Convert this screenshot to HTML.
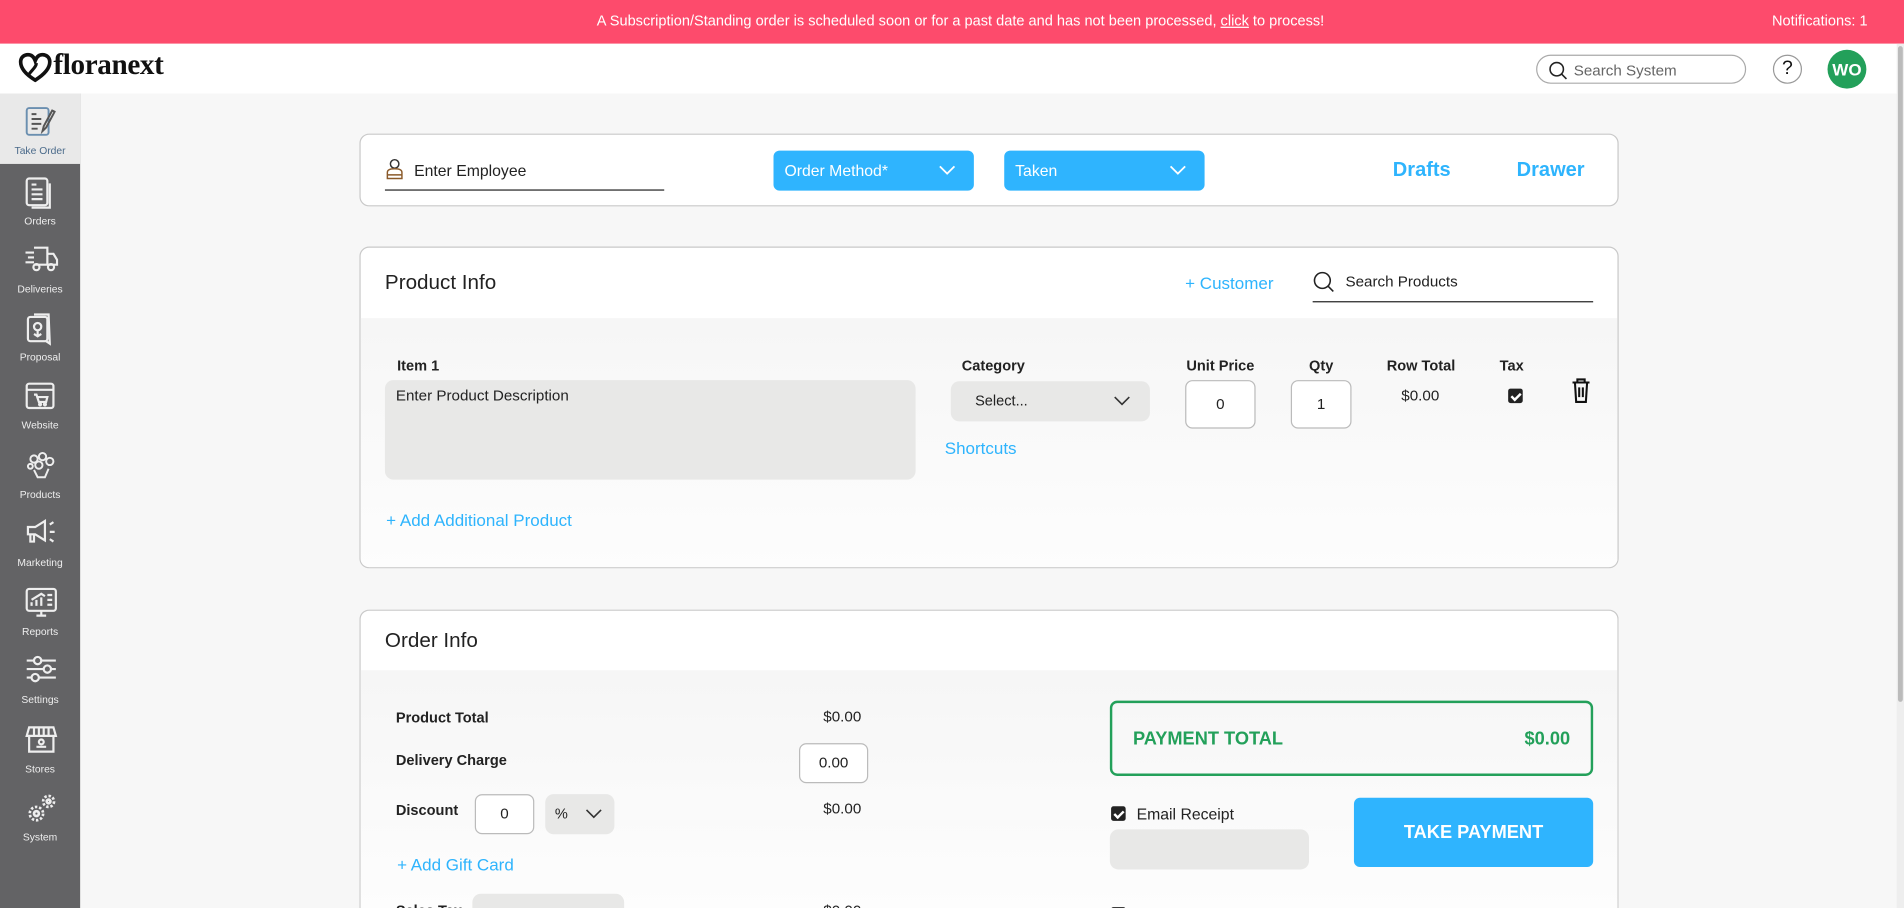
<!DOCTYPE html>
<html><head><meta charset="utf-8"><style>
*{box-sizing:border-box;margin:0;padding:0}
html,body{width:1904px;height:908px;overflow:hidden;background:#f7f7f7;font-family:"Liberation Sans",sans-serif;color:#222}
#o{position:relative;width:1904px;height:908px;overflow:hidden}
#w{position:absolute;left:0;top:0;width:1568px;height:748px;transform:scale(1.2143);transform-origin:0 0;background:#f7f7f7;overflow:hidden}
.a{position:absolute}
.bar{left:0;top:0;width:1568px;height:36px;background:#fd4b6c;color:#fff;font-size:12px}
.hdr{left:0;top:36px;width:1568px;height:41px;background:#fff}
.side{left:0;top:77px;width:66px;height:671px;background:#636365}
.si{position:absolute;left:0;width:66px;height:56px;text-align:center;color:#eee;font-size:8.5px}
.si svg{position:absolute;left:20px;top:10px}
.si span{position:absolute;left:0;right:0;top:42px}
.card{background:#fff;border:1px solid #c9c9c9;border-radius:8px}
.blue{color:#2eb4fd}
.btn{background:#2fb4fe;border-radius:5px;color:#fff;font-size:13px}
.lbl{font-size:12px;font-weight:bold;color:#222}
.inp{background:#fff;border:1px solid #bbb;border-radius:6px;font-size:12.5px;text-align:center}
.gray{background:#e8e8e7;border-radius:7px}
.chk{width:12px;height:12px;background:#222;border-radius:2px}
.chk:after{content:"";position:absolute;left:4px;top:1.5px;width:3px;height:6px;border:solid #fff;border-width:0 2px 2px 0;transform:rotate(45deg)}
</style></head><body><div id="o"><div id="w">
<div class="a bar"><div class="a" style="left:0;width:1582px;top:10px;text-align:center">A Subscription/Standing order is scheduled soon or for a past date and has not been processed, <u>click</u> to process!</div><div class="a" style="right:30px;top:10px">Notifications: 1</div></div>
<div class="a hdr">
<svg class="a" style="left:15px;top:7px" width="28" height="25" viewBox="0 0 28 25"><path d="M14 23C4 17 2 12 2 8 2 4 5 2 8 2c3 0 5 2 6 5 1-3 3-5 6-5 3 0 6 2 6 6 0 5-4 10-12 15z" fill="none" stroke="#111" stroke-width="3"/><path d="M9 18c2-3 6-6 6-9" fill="none" stroke="#111" stroke-width="2.5"/></svg>
<div class="a" style="left:44px;top:5px;font-family:'Liberation Serif',serif;font-weight:bold;font-size:24px;color:#111;letter-spacing:-0.3px">floranext</div>
<div class="a" style="left:1265px;top:9px;width:173px;height:24px;border:1px solid #aaa;border-radius:12px"><svg class="a" style="left:9px;top:4px" width="16" height="16" viewBox="0 0 16 16"><circle cx="7" cy="7" r="5.5" fill="none" stroke="#222" stroke-width="1.3"/><path d="M11 11l4 4" stroke="#222" stroke-width="1.3"/></svg><span class="a" style="left:30px;top:5px;font-size:12.5px;color:#666">Search System</span></div>
<div class="a" style="left:1460px;top:9px;width:24px;height:24px;border:1px solid #999;border-radius:50%;text-align:center;font-size:16px;line-height:22px;color:#111">?</div>
<div class="a" style="left:1505px;top:5px;width:32px;height:32px;background:#23a05a;border-radius:50%;color:#fff;font-weight:bold;font-size:14px;text-align:center;line-height:32px">WO</div>
</div>
<div class="a" style="left:1562px;top:36px;width:6px;height:712px;background:#eee"><div style="margin:2px 1px;height:540px;background:#bbb;border-radius:3px"></div></div>
<div class="a side">
<div class="si" style="top:0;background:#e9e9e9;height:58px;color:#4a6a8a"><svg width="26" height="26" viewBox="0 0 26 26" fill="none" stroke="#555" stroke-width="1.6"><rect x="2" y="2" width="18" height="22" rx="2" stroke="#6b8fb0"/><path d="M6 7h4M6 11h8M6 15h8M6 19h5"/><path d="M23 4l-7 13-1 4 3-3 7-13z"/></svg><span>Take Order</span></div>
<div class="si" style="top:58px"><svg width="26" height="28" viewBox="0 0 26 28" fill="none" stroke="#eee" stroke-width="1.8"><rect x="2" y="2" width="17" height="22" rx="2"/><path d="M21 6v20H6"/><path d="M6 7h4M6 11h9M6 15h9M6 19h9"/></svg><span>Orders</span></div>
<div class="si" style="top:114px"><svg width="28" height="24" viewBox="0 0 28 24" fill="none" stroke="#eee" stroke-width="1.8"><path d="M8 3h11v14H8M19 8h5l3 5v4h-8"/><circle cx="10" cy="19" r="2.5"/><circle cx="22" cy="19" r="2.5"/><path d="M1 7h7M3 11h5M1 15h7"/></svg><span>Deliveries</span></div>
<div class="si" style="top:170px"><svg width="26" height="28" viewBox="0 0 26 28" fill="none" stroke="#eee" stroke-width="1.8"><rect x="3" y="4" width="16" height="20" rx="2"/><path d="M8 2h12l1 24-3-2"/><circle cx="11" cy="12" r="3"/><path d="M11 15v5M8 18l3 2 3-2"/></svg><span>Proposal</span></div>
<div class="si" style="top:226px"><svg width="26" height="26" viewBox="0 0 26 26" fill="none" stroke="#eee" stroke-width="1.8"><rect x="2" y="3" width="22" height="20" rx="2"/><path d="M2 8h22M8 12h2l2 6h6l1-4h-9"/><circle cx="13" cy="20" r=".8"/><circle cx="17" cy="20" r=".8"/></svg><span>Website</span></div>
<div class="si" style="top:283px"><svg width="28" height="28" viewBox="0 0 28 28" fill="none" stroke="#eee" stroke-width="1.6"><circle cx="8" cy="8" r="3"/><circle cx="15" cy="6" r="3"/><circle cx="21" cy="10" r="3"/><circle cx="12" cy="13" r="3"/><circle cx="5" cy="14" r="2"/><path d="M8 17l3 6h6l3-7"/></svg><span>Products</span></div>
<div class="si" style="top:339px"><svg width="28" height="24" viewBox="0 0 28 24" fill="none" stroke="#eee" stroke-width="1.8"><path d="M3 8h6l8-5v16l-8-5H3zM5 14v6h3v-6"/><path d="M21 6l3-2M21 12h4M21 18l3 2"/></svg><span>Marketing</span></div>
<div class="si" style="top:396px"><svg width="28" height="28" viewBox="0 0 28 28" fill="none" stroke="#eee" stroke-width="1.8"><rect x="2" y="2" width="24" height="18" rx="2"/><path d="M6 16v-3M10 16v-5M14 16v-7M6 11l8-5 3 2M19 7h4M19 11h4M19 15h4M10 24h8M14 20v4"/></svg><span>Reports</span></div>
<div class="si" style="top:452px"><svg width="28" height="24" viewBox="0 0 28 24" fill="none" stroke="#eee" stroke-width="1.8"><path d="M2 5h6M14 5h12M2 12h14M22 12h4M2 19h4M12 19h14"/><circle cx="11" cy="5" r="3"/><circle cx="19" cy="12" r="3"/><circle cx="9" cy="19" r="3"/></svg><span>Settings</span></div>
<div class="si" style="top:509px"><svg width="28" height="26" viewBox="0 0 28 26" fill="none" stroke="#eee" stroke-width="1.8"><path d="M4 3h20l2 7H2zM4 10v13h20V10"/><path d="M8 3v7M12 3v7M16 3v7M20 3v7"/><circle cx="14" cy="15" r="2"/><path d="M10 19h8"/></svg><span>Stores</span></div>
<div class="si" style="top:565px"><svg width="28" height="28" viewBox="0 0 28 28" fill="none" stroke="#eee" stroke-width="2.2"><circle cx="10" cy="18" r="5.5" stroke-dasharray="2 1.5"/><circle cx="10" cy="18" r="2"/><circle cx="20" cy="8" r="4.5" stroke-dasharray="2 1.5"/><circle cx="20" cy="8" r="1.5"/></svg><span>System</span></div>
</div>

<div class="a card" style="left:296px;top:110px;width:1037px;height:60px">
<svg class="a" style="left:20px;top:19px" width="16" height="18" viewBox="0 0 16 18" fill="none" stroke="#333" stroke-width="1.2"><circle cx="8" cy="5" r="3.5"/><path d="M2 17v-5c0-2 2-3 6-3s6 1 6 3v5zM2 14h12" stroke="#8a5a2a"/></svg>
<div class="a" style="left:44px;top:22px;font-size:13px">Enter Employee</div>
<div class="a" style="left:20px;top:45px;width:230px;height:1px;background:#222"></div>
<div class="a btn" style="left:340px;top:13px;width:165px;height:33px"><span class="a" style="left:9px;top:9px">Order Method*</span><svg class="a" style="left:136px;top:12px" width="14" height="9" viewBox="0 0 14 9"><path d="M1 1l6 6 6-6" fill="none" stroke="#fff" stroke-width="1.5"/></svg></div>
<div class="a btn" style="left:530px;top:13px;width:165px;height:33px"><span class="a" style="left:9px;top:9px">Taken</span><svg class="a" style="left:136px;top:12px" width="14" height="9" viewBox="0 0 14 9"><path d="M1 1l6 6 6-6" fill="none" stroke="#fff" stroke-width="1.5"/></svg></div>
<div class="a blue" style="left:850px;top:20px;font-size:16.5px;font-weight:bold">Drafts</div>
<div class="a blue" style="left:952px;top:20px;font-size:16.5px;font-weight:bold">Drawer</div>
</div>

<div class="a card" style="left:296px;top:203px;width:1037px;height:265px;overflow:hidden">
<div class="a" style="left:0;top:58px;width:1037px;height:207px;background:linear-gradient(#f6f6f6,#fdfdfd)"></div>
<div class="a" style="left:20px;top:19px;font-size:17px">Product Info</div>
<div class="a blue" style="left:679px;top:21px;font-size:14px">+ Customer</div>
<svg class="a" style="left:784px;top:19px" width="18" height="18" viewBox="0 0 18 18"><circle cx="8" cy="8" r="6.5" fill="none" stroke="#222" stroke-width="1.3"/><path d="M12.5 12.5l4.5 4.5" stroke="#222" stroke-width="1.3"/></svg>
<div class="a" style="left:811px;top:21px;font-size:12.5px">Search Products</div>
<div class="a" style="left:784px;top:44px;width:231px;height:1px;background:#222"></div>
<div class="a lbl" style="left:30px;top:90px">Item 1</div>
<div class="a lbl" style="left:495px;top:90px">Category</div>
<div class="a lbl" style="left:680px;top:90px">Unit Price</div>
<div class="a lbl" style="left:781px;top:90px">Qty</div>
<div class="a lbl" style="left:845px;top:90px">Row Total</div>
<div class="a lbl" style="left:938px;top:90px">Tax</div>
<div class="a gray" style="left:20px;top:109px;width:437px;height:82px"><span class="a" style="left:9px;top:6px;font-size:12.5px">Enter Product Description</span></div>
<div class="a gray" style="left:486px;top:110px;width:164px;height:33px"><span class="a" style="left:20px;top:9px;font-size:12px">Select...</span><svg class="a" style="left:134px;top:12px" width="14" height="9" viewBox="0 0 14 9"><path d="M1 1l6 6 6-6" fill="none" stroke="#333" stroke-width="1.3"/></svg></div>
<div class="a blue" style="left:481px;top:157px;font-size:14px">Shortcuts</div>
<div class="a inp" style="left:679px;top:109px;width:58px;height:40px;line-height:38px">0</div>
<div class="a inp" style="left:766px;top:109px;width:50px;height:40px;line-height:38px">1</div>
<div class="a" style="left:857px;top:115px;font-size:12.5px">$0.00</div>
<div class="a chk" style="left:945px;top:116px"></div>
<svg class="a" style="left:997px;top:107px" width="16" height="21" viewBox="0 0 16 21" fill="none" stroke="#111" stroke-width="1.7"><path d="M1 4h14M5 4V1.5h6V4M3 4l1 16h8l1-16M6.5 8v8M9.5 8v8"/></svg>
<div class="a blue" style="left:21px;top:216px;font-size:14px">+ Add Additional Product</div>
</div>

<div class="a card" style="left:296px;top:502px;width:1037px;height:246px;overflow:hidden;border-bottom:none;border-radius:8px 8px 0 0">
<div class="a" style="left:0;top:49px;width:1037px;height:197px;background:linear-gradient(#f6f6f6,#fdfdfd)"></div>
<div class="a" style="left:20px;top:15px;font-size:17px">Order Info</div>
<div class="a lbl" style="left:29px;top:81px">Product Total</div>
<div class="a" style="left:381px;top:80px;font-size:12.5px">$0.00</div>
<div class="a lbl" style="left:29px;top:116px">Delivery Charge</div>
<div class="a inp" style="left:361px;top:109px;width:57px;height:33px;line-height:31px">0.00</div>
<div class="a lbl" style="left:29px;top:157px">Discount</div>
<div class="a inp" style="left:94px;top:151px;width:49px;height:33px;line-height:31px">0</div>
<div class="a gray" style="left:152px;top:151px;width:57px;height:33px"><span class="a" style="left:8px;top:9px;font-size:12px">%</span><svg class="a" style="left:33px;top:12px" width="14" height="9" viewBox="0 0 14 9"><path d="M1 1l6 6 6-6" fill="none" stroke="#333" stroke-width="1.3"/></svg></div>
<div class="a" style="left:381px;top:156px;font-size:12.5px">$0.00</div>
<div class="a blue" style="left:30px;top:201px;font-size:14px">+ Add Gift Card</div>
<div class="a lbl" style="left:29px;top:240px">Sales Tax</div>
<div class="a gray" style="left:92px;top:233px;width:125px;height:33px"></div>
<div class="a" style="left:381px;top:240px;font-size:12.5px">$0.00</div>
<div class="a" style="left:617px;top:74px;width:398px;height:62px;border:2px solid #23a05a;border-radius:6px;color:#23a05a;font-weight:bold;font-size:15px"><span class="a" style="left:17px;top:21px">PAYMENT TOTAL</span><span class="a" style="right:17px;top:21px">$0.00</span></div>
<div class="a chk" style="left:618px;top:161px"></div>
<div class="a" style="left:639px;top:160px;font-size:13px">Email Receipt</div>
<div class="a gray" style="left:617px;top:180px;width:164px;height:33px"></div>
<div class="a btn" style="left:818px;top:154px;width:197px;height:57px;font-weight:bold;font-size:15px;text-align:center;line-height:57px">TAKE PAYMENT</div>
<div class="a chk" style="left:618px;top:244px"></div>
</div>
</div></div></body></html>
